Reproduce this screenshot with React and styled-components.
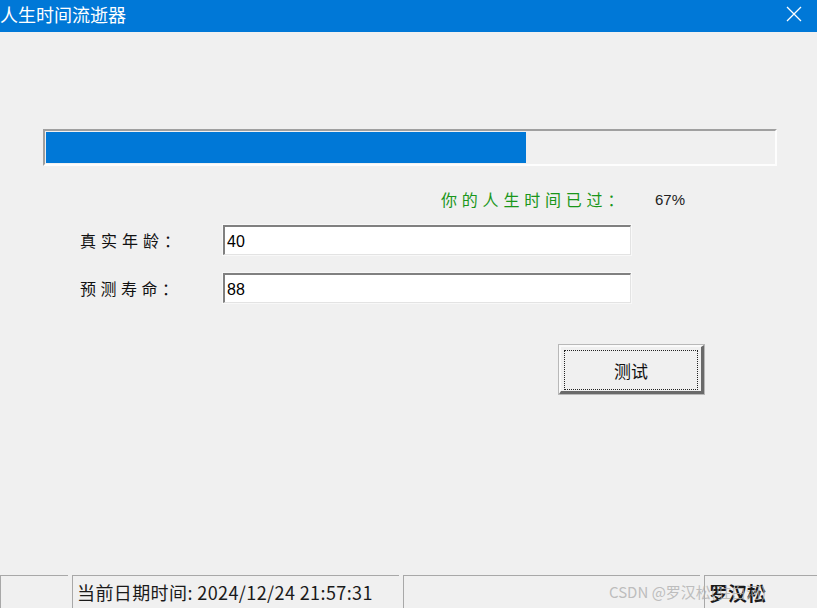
import React from "react";
import styled, { createGlobalStyle } from "styled-components";

const GlobalStyle = createGlobalStyle`
  html, body {
    margin: 0;
    padding: 0;
    background: #f0f0f0;
  }
  body {
    font-family: "Noto Sans CJK SC", "Liberation Sans", sans-serif;
  }
`;

const Window = styled.div`
  display: flex;
  flex-direction: column;
  width: 817px;
  height: 608px;
  background: #f0f0f0;
  overflow: hidden;
  position: relative;
`;

const TitleBar = styled.div`
  display: flex;
  align-items: center;
  justify-content: space-between;
  height: 32px;
  background: #0078d7;
  color: #fff;
  flex-shrink: 0;
`;

const Title = styled.span`
  font-size: 18px;
  line-height: 1;
  margin-top: -4px;
`;

const CloseBtn = styled.div`
  width: 46px;
  height: 32px;
  display: flex;
  align-items: center;
  justify-content: center;
  margin-top: -4px;
`;

const Body = styled.div`
  flex: 1;
  display: flex;
  flex-direction: column;
  padding: 97px 40px 0 43px;
`;

const ProgressOuter = styled.div`
  box-sizing: border-box;
  width: 734px;
  height: 37px;
  border-top: 2px solid #a0a0a0;
  border-left: 2px solid #a0a0a0;
  border-right: 2px solid #fdfdfd;
  border-bottom: 2px solid #fdfdfd;
  padding: 1px;
  background: #f0f0f0;
`;

const ProgressFill = styled.div`
  height: 100%;
  background: #0078d7;
`;

const PercentRow = styled.div`
  display: flex;
  align-items: center;
  margin-top: 20px;
  padding-left: 398px;
  height: 26px;
`;

const PercentLabel = styled.span`
  color: #1a961a;
  font-size: 16px;
  letter-spacing: 4.8px;
  width: 214px;
`;

const PercentValue = styled.span`
  color: #222;
  font-size: 15px;
  font-family: "Liberation Sans", sans-serif;
`;

const FormRow = styled.div`
  display: flex;
  align-items: center;
  margin-top: ${(p) => p.$top}px;
  padding-left: 37px;
`;

const FieldLabel = styled.span`
  width: 143px;
  font-size: 16px;
  letter-spacing: ${(p) => p.$spacing}px;
  color: #111;
`;

const TextInput = styled.input`
  box-sizing: border-box;
  width: 408px;
  height: 30px;
  border-top: 2px solid #808080;
  border-left: 2px solid #808080;
  border-right: 1px solid #e3e3e3;
  border-bottom: 1px solid #e3e3e3;
  outline: 1px solid #f8f8f8;
  background: #fff;
  font-family: "Liberation Sans", sans-serif;
  font-size: 16px;
  padding: 2px 2px 0;
  color: #000;
`;

const ButtonRow = styled.div`
  display: flex;
  padding-left: 516px;
  margin-top: 42px;
`;

const Button = styled.button`
  box-sizing: border-box;
  width: 145px;
  height: 49px;
  background: #f0f0f0;
  border-top: 2px solid #fafafa;
  border-left: 2px solid #fafafa;
  border-right: 3px solid #6a6a6a;
  border-bottom: 3px solid #6a6a6a;
  outline: 1px solid #b8b8b8;
  padding: 3px;
  font-family: "Noto Sans CJK SC", sans-serif;
  font-size: 17px;
  color: #111;
`;

const FocusRing = styled.div`
  height: 100%;
  border: 1px dotted #222;
  display: flex;
  align-items: center;
  justify-content: center;
`;

const StatusBar = styled.div`
  display: flex;
  height: 33px;
  flex-shrink: 0;
  align-items: stretch;
  gap: 4px;
`;

const Panel = styled.div`
  box-sizing: border-box;
  width: ${(p) => p.$w}px;
  flex-shrink: 0;
  border-top: 1px solid #a8a8a8;
  border-left: 1px solid #a8a8a8;
  display: flex;
  align-items: center;
  padding-left: 4px;
  font-size: ${(p) => (p.$bold ? 19 : 18)}px;
  letter-spacing: ${(p) => (p.$bold ? 0 : 0.4)}px;
  color: #1a1a1a;
  white-space: nowrap;
  overflow: hidden;
  font-weight: ${(p) => (p.$bold ? 700 : 400)};
`;

const Watermark = styled.div`
  position: absolute;
  left: 609px;
  bottom: 6px;
  font-size: 15px;
  color: rgba(175, 175, 175, 0.8);
  pointer-events: none;
  white-space: nowrap;
`;

export default function App() {
  const progressWidth = 480;
  return (
    <>
      <GlobalStyle />
      <Window>
        <TitleBar>
          <Title>人生时间流逝器</Title>
          <CloseBtn>
            <svg width="16" height="16" viewBox="0 0 16 16">
              <path d="M1 1 L15 15 M15 1 L1 15" stroke="#fff" strokeWidth="1.3" />
            </svg>
          </CloseBtn>
        </TitleBar>
        <Body>
          <ProgressOuter>
            <ProgressFill style={{ width: `${progressWidth}px` }} />
          </ProgressOuter>
          <PercentRow>
            <PercentLabel>你的人生时间已过：</PercentLabel>
            <PercentValue>67%</PercentValue>
          </PercentRow>
          <FormRow $top={13}>
            <FieldLabel $spacing={5}>真实年龄：</FieldLabel>
            <TextInput defaultValue="40" />
          </FormRow>
          <FormRow $top={18}>
            <FieldLabel $spacing={4.5}>预测寿命：</FieldLabel>
            <TextInput defaultValue="88" />
          </FormRow>
          <ButtonRow>
            <Button>
              <FocusRing>测试</FocusRing>
            </Button>
          </ButtonRow>
        </Body>
        <StatusBar>
          <Panel $w={68} />
          <Panel $w={327}>当前日期时间: 2024/12/24 21:57:31</Panel>
          <Panel $w={297} />
          <Panel $w={114} $bold>罗汉松</Panel>
        </StatusBar>
        <Watermark>CSDN @罗汉松(驻白河)</Watermark>
      </Window>
    </>
  );
}
